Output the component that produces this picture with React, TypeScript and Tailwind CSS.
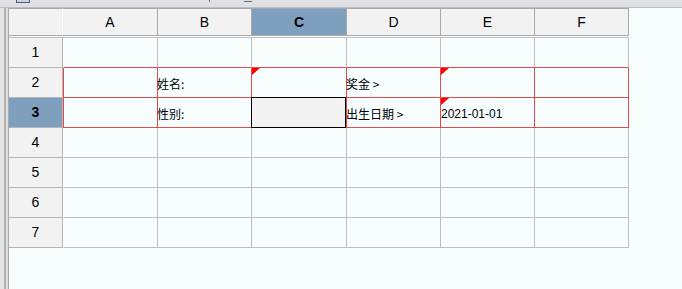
import React from 'react';

const COLS = [
  { key: 'A', w: 'w-[95px]' },
  { key: 'B', w: 'w-[94px]' },
  { key: 'C', w: 'w-[95px]' },
  { key: 'D', w: 'w-[94px]' },
  { key: 'E', w: 'w-[94px]' },
  { key: 'F', w: 'w-[94px]' },
];

const ROWS = [1, 2, 3, 4, 5, 6, 7];

const VALUES: Record<string, string> = {
  B2: '姓名:',
  B3: '性别:',
  D2: '奖金 >',
  D3: '出生日期 >',
  E3: '2021-01-01',
};

const MARKED = ['C2', 'E2', 'E3'];

function Marker() {
  return (
    <svg className="absolute left-0 top-0" width="8" height="7" viewBox="0 0 8 7">
      <polygon points="0,0 8,0 0,7" fill="#ff0000" />
    </svg>
  );
}

function Cell({ col, w, row }: { col: string; w: string; row: number }) {
  const id = `${col}${row}`;
  const redRow = row === 2 || row === 3;
  const redBottom = row <= 3;
  const selected = id === 'C3';
  const text = VALUES[id];
  const isLatin = id === 'E3';

  return (
    <div
      className={[
        'relative h-[30px] border-r border-b flex items-center pt-[3px]',
        w,
        redRow ? 'border-r-[#de4b4b]' : 'border-r-[#bfbfbf]',
        redBottom ? 'border-b-[#de4b4b]' : 'border-b-[#bfbfbf]',
        col === 'A' ? (redRow ? 'border-l border-l-[#de4b4b]' : 'border-l border-l-transparent') : '',
      ].join(' ')}
    >
      {selected && (
        <div className="absolute -left-px -top-px w-[95px] h-[31px] border border-black bg-[#f2f2f2]" />
      )}
      {MARKED.includes(id) && <Marker />}
      {text && (
        <span
          className={
            isLatin
              ? "text-[12px] leading-none text-black font-['Liberation_Sans',sans-serif]"
              : "-ml-px text-[12px] leading-none text-black font-['Noto_Sans_CJK_SC','Liberation_Sans',sans-serif] whitespace-pre"
          }
        >
          {text}
        </span>
      )}
    </div>
  );
}

export default function App() {
  return (
    <div className="w-[682px] h-[289px] overflow-hidden bg-[#f8fefe] flex flex-col font-['Liberation_Sans',sans-serif]">
      {/* window title strip, cut off */}
      <div className="h-[8px] shrink-0 bg-[#dfe0e4] border-b border-[#b9bcc3] flex items-start">
        <div className="ml-[16px] w-[14px] h-[3px] border-x border-b border-[#4d5b76] bg-[#c9d3e4]" />
        <div className="ml-[179px] w-px h-[2px] bg-[#6a6d74]" />
        <div className="ml-[34px] mt-px w-[8px] h-px bg-[#6a6d74]" />
      </div>

      <div className="flex flex-1">
        {/* left edge */}
        <div className="flex shrink-0">
          <div className="w-[4px] bg-[#e4e4e4]" />
          <div className="w-[2px] bg-[#b3b3b3]" />
          <div className="w-[2px] bg-[#dedede]" />
          <div className="w-px bg-[#a9a9a9]" />
        </div>

        <div className="flex flex-col">
          {/* column headers */}
          <div className="flex h-[28px]">
            <div className="w-[54px] border-y border-r border-y-[#a9a9a9] border-r-white bg-[#f2f2f2]" />
            {COLS.map((c) => (
              <div
                key={c.key}
                className={[
                  'flex items-center justify-center border-y border-r border-[#a9a9a9] text-[14px] text-black',
                  c.w,
                  c.key === 'C' ? 'bg-[#7f9fbe] font-bold' : 'bg-[#f2f2f2]',
                ].join(' ')}
              >
                {c.key}
              </div>
            ))}
          </div>

          {/* body */}
          <div className="mt-px border-t border-[#bfbfbf] flex flex-col w-fit">
            {ROWS.map((r) => (
              <div key={r} className="flex">
                <div
                  className={[
                    'w-[54px] h-[30px] border-r border-b border-[#b5b5b5] flex items-center justify-center text-[14px] text-black',
                    r === 3 ? 'bg-[#7f9fbe] font-bold' : 'bg-[#f2f2f2]',
                  ].join(' ')}
                >
                  {r}
                </div>
                {COLS.map((c) => (
                  <Cell key={c.key} col={c.key} w={c.w} row={r} />
                ))}
              </div>
            ))}
          </div>
        </div>
      </div>
    </div>
  );
}
